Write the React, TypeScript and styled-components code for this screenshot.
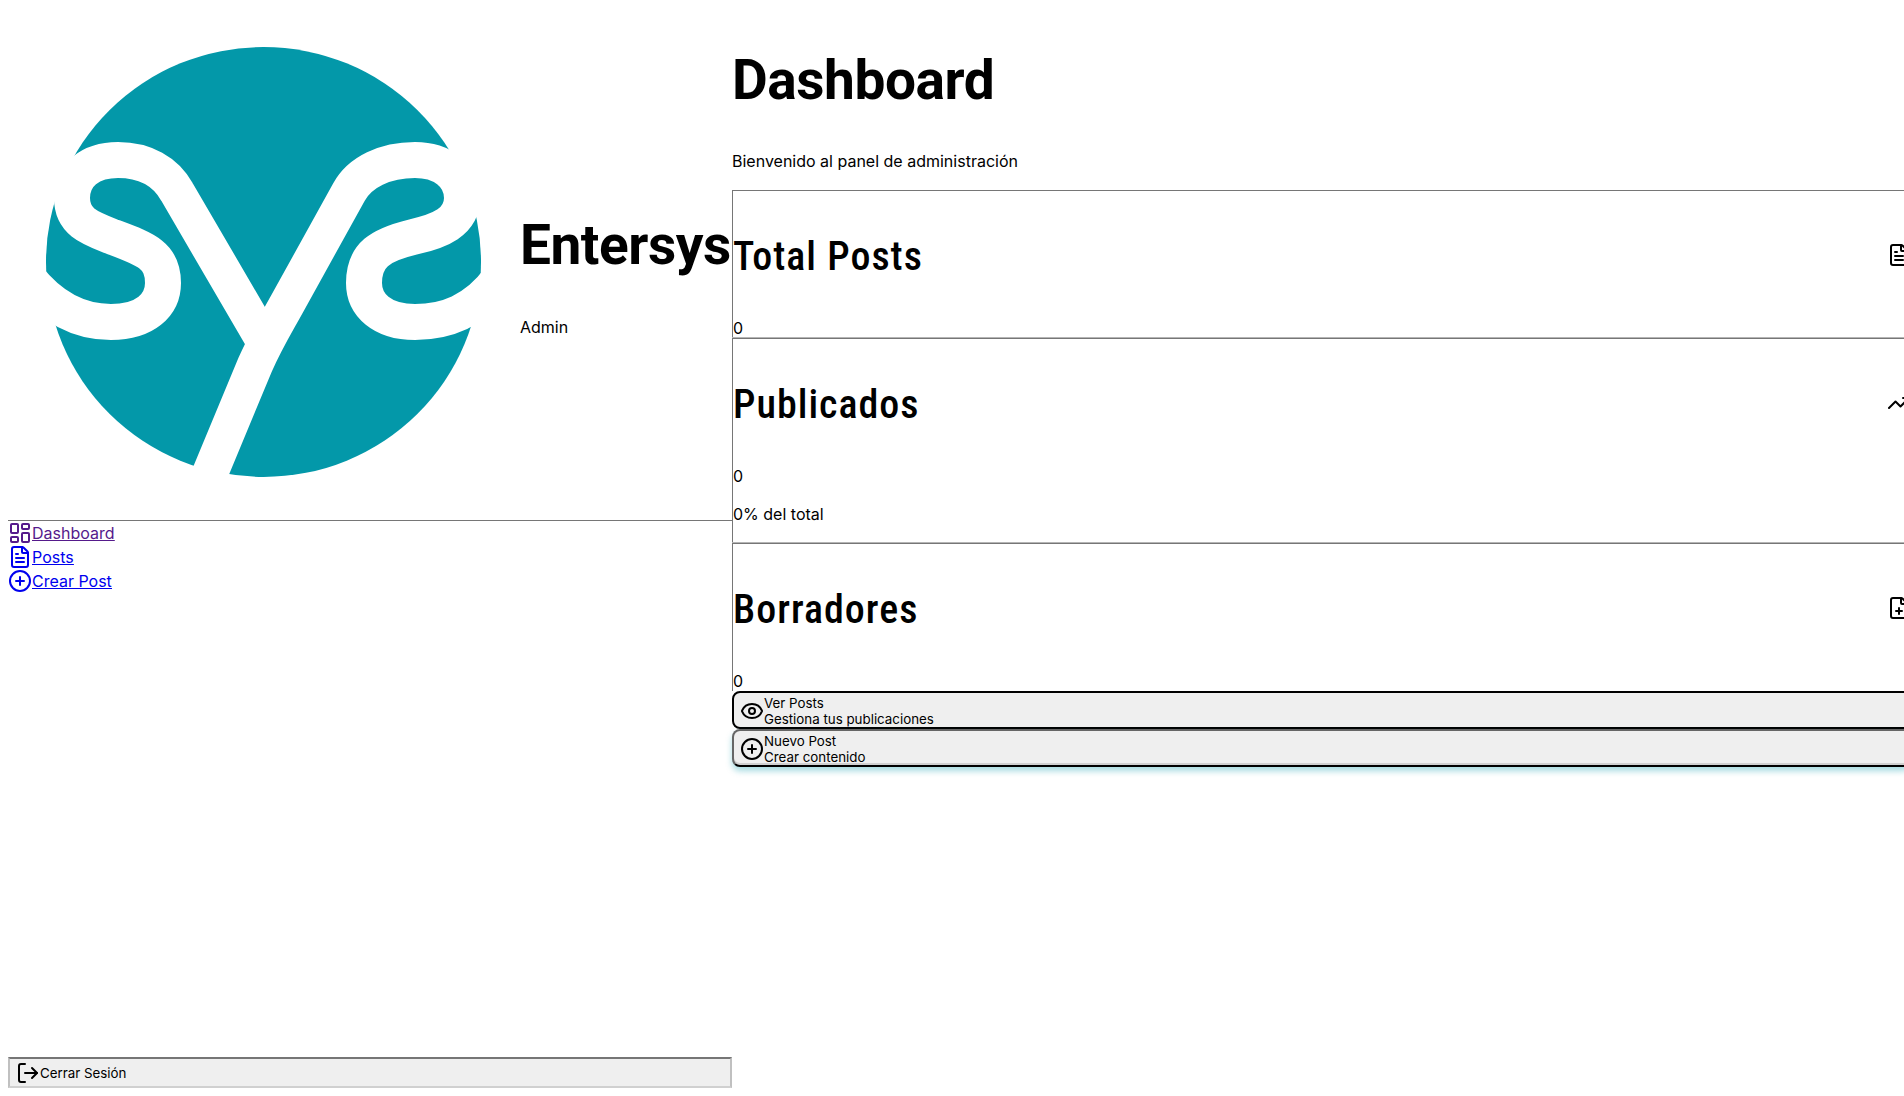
import styled, { createGlobalStyle } from "styled-components";
import {
  CirclePlus,
  Eye,
  FilePlus,
  FileText,
  LayoutDashboard,
  LogOut,
  TrendingUp,
} from "lucide-react";

const GlobalStyle = createGlobalStyle`
  body {
    margin: 8px 0 8px 8px;
    font-family: Inter, "Noto Sans", sans-serif;
    font-size: 16px;
    color: #000;
    background: #fff;
  }
`;

const Layout = styled.div`
  display: flex;
  width: 1903px;
  height: 1080px;
`;

const Sidebar = styled.aside`
  flex: 0 0 724px;
  min-width: 0;
  display: flex;
  flex-direction: column;
`;

const Brand = styled.header`
  display: flex;
  align-items: center;
  border-bottom: 1px solid #767676;
  box-shadow: 0 -1px 0 #bbb;
`;

const LogoMark = styled.svg`
  display: block;
  flex: 0 0 512px;
  width: 512px;
  height: 512px;
`;

const Heading = styled.h1`
  font-family: Roboto, sans-serif;
  font-size: 55px;
  line-height: 67px;
  font-weight: 700;
  letter-spacing: -0.45px;
  margin: 39px 0 36px;
  white-space: nowrap;
`;

const Lead = styled.p`
  line-height: 24px;
  margin: 0 0 16px;
`;

const Welcome = styled(Lead)`
  margin: -1px 0 17px;
`;

const Nav = styled.nav`
  flex: 1;
  display: flex;
  flex-direction: column;
`;

const NavLink = styled.a<{ $visited?: boolean }>`
  display: flex;
  align-items: center;
  height: 24px;
  width: max-content;
  color: ${(p) => (p.$visited ? "#551a8b" : "#0000ee")};

  span {
    text-decoration: underline;
  }
`;

const LogoutButton = styled.button`
  display: flex;
  align-items: center;
  height: 31px;
  padding: 1px 6px;
  border: 2px solid #c0c0c0;
  border-top-color: #767676;
  border-bottom-color: #d0d0d0;
  background: #efefef;
  color: #000;
  font-family: Inter, sans-serif;
  font-size: 13.333px;
`;

const Main = styled.main`
  flex: 0 0 1179px;
`;

const Card = styled.section`
  display: flow-root;
  border-top: 1px solid #767676;
  border-left: 1px solid #767676;

  & + & {
    box-shadow: 0 -1px 0 #b5b5b5;
  }
`;

const CardHeader = styled.div`
  display: flex;
  align-items: center;
  justify-content: space-between;
`;

const CardTitle = styled.h3`
  font-family: Roboto, sans-serif;
  font-stretch: 85%;
  font-size: 40px;
  line-height: 48px;
  font-weight: 500;
  letter-spacing: 1px;
  margin: 42px 0 38px;
`;

const CardValue = styled.div`
  line-height: 19px;
`;

const CardNote = styled.p`
  line-height: 24px;
  margin: 16px 0 17px;
`;

const ActionButton = styled.button<{ $hover?: boolean }>`
  display: flex;
  align-items: center;
  width: 100%;
  height: 38px;
  padding: 2px 6px 0;
  border: 2px solid ${(p) => (p.$hover ? "#666" : "#000")};
  border-bottom-color: #000;
  border-radius: 8px;
  background: #efefef;
  color: #000;
  font-family: Inter, sans-serif;
  font-size: 13.333px;
  line-height: 16px;
  text-align: left;
  box-shadow: ${(p) =>
    p.$hover
      ? "0 4px 6px rgba(3, 152, 169, 0.35), inset 0 -2px 0 #d0d0d0"
      : "none"};
`;

const ActionText = styled.span`
  display: block;
`;

function Logo() {
  return (
    <LogoMark viewBox="8 8 512 512" aria-label="Entersys">
      <ellipse cx="263.5" cy="262" rx="217.5" ry="215" fill="#0398a9" />
      <g fill="none" stroke="#fff" strokeWidth="36">
        <path d="M268 348L177 192C166 172 145 160 118 160C90 160 72 175 72 198C72 222 90 228 113 237C145 249 163 255 163 283C163 305 145 322 111 322C85 322 55 312 28 278" />
        <path d="M201 495L255 365C266 340 276 324 287 304L349 192C360 172 385 160 415 160C442 160 462 175 462 198C462 222 440 231 413 237C380 245 364 255 364 283C364 305 382 322 415 322C445 322 475 312 500 278" />
      </g>
    </LogoMark>
  );
}

const stats = [
  { title: "Total Posts", value: "0", Icon: FileText },
  { title: "Publicados", value: "0", note: "0% del total", Icon: TrendingUp },
  { title: "Borradores", value: "0", Icon: FilePlus },
];

export default function App() {
  return (
    <>
      <GlobalStyle />
      <Layout>
        <Sidebar>
          <Brand>
            <Logo />
            <div>
              <Heading>Entersys</Heading>
              <Lead>Admin</Lead>
            </div>
          </Brand>
          <Nav>
            <NavLink href="#" $visited>
              <LayoutDashboard size={24} />
              <span>Dashboard</span>
            </NavLink>
            <NavLink href="#">
              <FileText size={24} />
              <span>Posts</span>
            </NavLink>
            <NavLink href="#">
              <CirclePlus size={24} />
              <span>Crear Post</span>
            </NavLink>
          </Nav>
          <LogoutButton>
            <LogOut size={24} />
            Cerrar Sesión
          </LogoutButton>
        </Sidebar>
        <Main>
          <Heading>Dashboard</Heading>
          <Welcome>Bienvenido al panel de administración</Welcome>
          {stats.map(({ title, value, note, Icon }) => (
            <Card key={title}>
              <CardHeader>
                <CardTitle>{title}</CardTitle>
                <Icon size={24} />
              </CardHeader>
              <CardValue>{value}</CardValue>
              {note && <CardNote>{note}</CardNote>}
            </Card>
          ))}
          <ActionButton>
            <Eye size={24} />
            <ActionText>
              Ver Posts
              <br />
              Gestiona tus publicaciones
            </ActionText>
          </ActionButton>
          <ActionButton $hover>
            <CirclePlus size={24} />
            <ActionText>
              Nuevo Post
              <br />
              Crear contenido
            </ActionText>
          </ActionButton>
        </Main>
      </Layout>
    </>
  );
}
